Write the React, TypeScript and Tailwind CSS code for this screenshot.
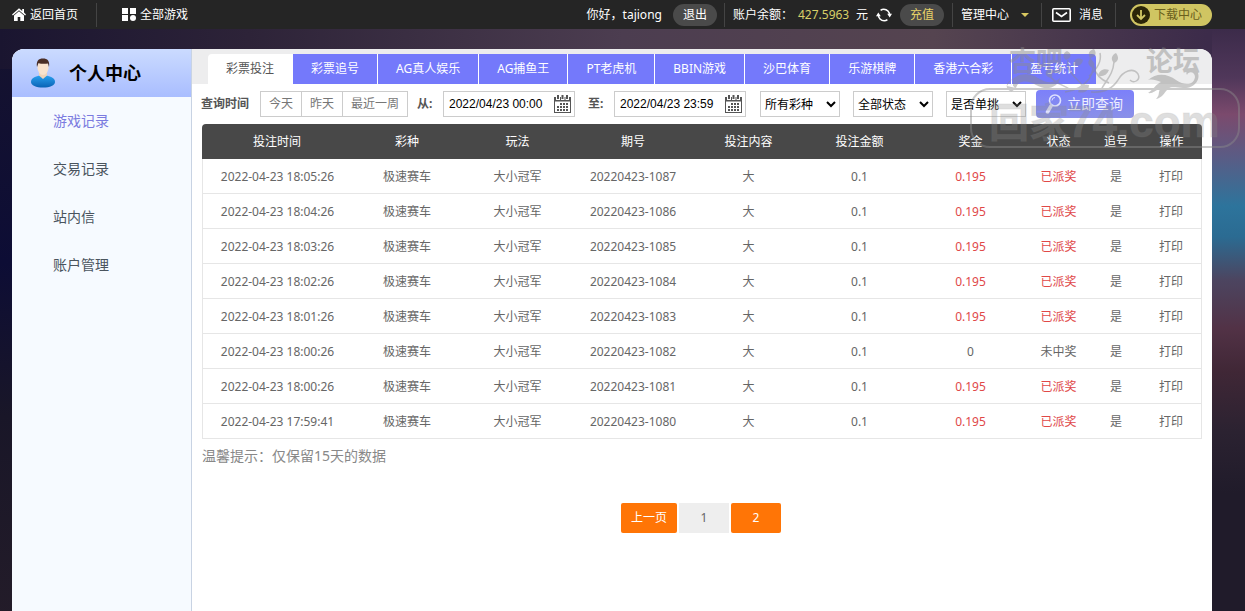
import { useState } from "react";

const tabs = [
  "彩票投注",
  "彩票追号",
  "AG真人娱乐",
  "AG捕鱼王",
  "PT老虎机",
  "BBIN游戏",
  "沙巴体育",
  "乐游棋牌",
  "香港六合彩",
  "盈亏统计",
];

const menu = ["游戏记录", "交易记录", "站内信", "账户管理"];

const columns = [
  { title: "投注时间", width: "w-[15%]" },
  { title: "彩种", width: "w-[11%]" },
  { title: "玩法", width: "w-[11.1%]" },
  { title: "期号", width: "w-[12%]" },
  { title: "投注内容", width: "w-[11.1%]" },
  { title: "投注金额", width: "w-[11.1%]" },
  { title: "奖金", width: "w-[11.1%]" },
  { title: "状态", width: "w-[6.5%]" },
  { title: "追号", width: "w-[5%]" },
  { title: "操作", width: "w-[6.1%]" },
];

const bets = [
  { time: "2022-04-23 18:05:26", issue: "20220423-1087", prize: "0.195" },
  { time: "2022-04-23 18:04:26", issue: "20220423-1086", prize: "0.195" },
  { time: "2022-04-23 18:03:26", issue: "20220423-1085", prize: "0.195" },
  { time: "2022-04-23 18:02:26", issue: "20220423-1084", prize: "0.195" },
  { time: "2022-04-23 18:01:26", issue: "20220423-1083", prize: "0.195" },
  { time: "2022-04-23 18:00:26", issue: "20220423-1082", prize: "0" },
  { time: "2022-04-23 18:00:26", issue: "20220423-1081", prize: "0.195" },
  { time: "2022-04-23 17:59:41", issue: "20220423-1080", prize: "0.195" },
];

function HomeIcon() {
  return (
    <svg width="14" height="13" viewBox="0 0 14 13" fill="#fff">
      <path d="M7 0.3 0 6.4l.9 1L7 2.2l6.1 5.2.9-1-2-1.8V1h-1.8v2z" />
      <path d="M7 3.3 2 7.6V13h3.7V9h2.6v4H12V7.6z" />
    </svg>
  );
}

function GridIcon() {
  return (
    <svg width="14" height="13" viewBox="0 0 14 13" fill="#fff">
      <rect width="6" height="6" />
      <rect x="8" width="6" height="6" />
      <rect y="7" width="6" height="6" />
      <circle cx="11" cy="10" r="3" />
    </svg>
  );
}

function RefreshIcon() {
  return (
    <svg width="16" height="14" viewBox="0 0 16 14" fill="none" stroke="#fff" strokeWidth="1.6">
      <path d="M2.3 6.500C2.300 10 5 12.800 8.200 12.800c1.300 0 2.300-.4 3.200-1.100" />
      <path d="M13.700 7.500C13.700 4 11 1.200 7.800 1.200c-1.300 0-2.300.4-3.200 1.100" />
      <path d="M0 8.300 2.300 4.500l2.500 3.800zM16 5.700 13.700 9.500l-2.500-3.800z" fill="#fff" stroke="none" />
    </svg>
  );
}

function MailIcon() {
  return (
    <svg width="19" height="14" viewBox="0 0 19 14" fill="none" stroke="#fff" strokeWidth="1.6">
      <rect x=".8" y=".8" width="17.4" height="12.4" rx="1" />
      <path d="m4 4.5 5.5 4 5.5-4" />
    </svg>
  );
}

function DownloadIcon() {
  return (
    <svg width="18" height="18" viewBox="0 0 18 18">
      <circle cx="9" cy="9" r="9" fill="#2b2508" />
      <path d="M9 4v8.5M5 9l4 4 4-4" fill="none" stroke="#d3c966" strokeWidth="1.8" />
    </svg>
  );
}

function CalendarIcon() {
  return (
    <svg width="17" height="18" viewBox="0 0 17 18" fill="#555">
      <path d="M3 0h2v4H3zM7.5 0h2v4h-2zM12 0h2v4h-2z" />
      <path
        fillRule="evenodd"
        d="M0 2h2v3h4V2h1v3h3.500V2h1v3H15V2h2v16H0zM1 6.500V17h15V6.500z"
      />
      <path d="M6 8h2v2H6zM9 8h2v2H9zM12 8h2v2h-2zM3 11h2v2H3zM6 11h2v2H6zM9 11h2v2H9zM12 11h2v2h-2zM3 14h2v2H3zM6 14h2v2H6zM9 14h2v2H9zM12 14h2v2h-2z" />
    </svg>
  );
}

function UserIcon() {
  return (
    <svg width="26" height="30" viewBox="0 0 26 30">
      <defs>
        <linearGradient id="shirt" x1="0" y1="0" x2="0" y2="1">
          <stop offset="0" stopColor="#2aa0ee" />
          <stop offset="1" stopColor="#0a63b5" />
        </linearGradient>
      </defs>
      <path d="M1 24c0-4 4-5.500 8.500-6.500h7C21 18.500 25 20 25 24c0 3.500-5 5.500-12 5.500S1 27.500 1 24z" fill="url(#shirt)" />
      <path d="M9 17.500 13 21l4-3.500V14H9z" fill="#f1d3b8" />
      <ellipse cx="13" cy="9.500" rx="5.500" ry="7.500" fill="#fae3cd" />
      <path d="M7 9C6 3 8.500.5 13 .5S20 3 19 9l-1-3.500c-3 .6-7 .5-9.500-.5z" fill="#4b2e26" />
    </svg>
  );
}

function SearchIcon() {
  return (
    <svg width="17" height="20" viewBox="0 0 17 20" fill="none" stroke="#dfe2ff">
      <circle cx="10" cy="6.500" r="5.500" strokeWidth="1.600" />
      <path d="M7 6.500a3 3 0 0 1 3-3" />
      <path d="m6 12-3.500 6" strokeWidth="3.500" strokeLinecap="round" />
    </svg>
  );
}

function Stamp() {
  return (
    <svg
      className="pointer-events-none absolute top-10 right-0 opacity-45"
      width="280"
      height="115"
      viewBox="0 0 280 115"
      fill="#8c8c8c"
      fontWeight="bold"
      aria-hidden="true"
    >
      <rect x="6" y="49" width="268" height="58" rx="19" fill="none" stroke="#8c8c8c" strokeWidth="2" />
      <text x="44" y="31" fontSize="27">杏吧</text>
      <text x="181" y="31" fontSize="27">论坛</text>
      <g fillOpacity=".65" stroke="#8c8c8c" strokeOpacity=".35">
        <text x="24" y="97" fontSize="40">回家</text>
        <text x="103" y="97" fontSize="44" fontFamily="Liberation Sans">74.com</text>
      </g>
      <path d="M42 46c6-12 20-15 31-8 9 6 17 5 22 0-2 10-14 13-24 7-8-5-18-5-20 3zM48 39c-6 2-9 9-3 12 4 1 6-4 3-5" />
      <path d="M183 40c9-8 20-6 28 0 9 6 18 5 19-3 0-6-7-6-8-2-3-6 6-9 10-4 5 8-3 18-14 17-7 0-11-2-15 1-4 4-6 9-12 10 4-4 2-6 4-10-5 1-7 5-12 4 5-3 8-9 13-11-5-2-9-3-13-2z" />
      <g fill="none" stroke="#8c8c8c" strokeWidth="1.5">
        <path d="M100 52c8-1 18-5 24-13 5-7 5-14 1-21M106 50c-7-5-16-6-21-14M117 45c-6-8-16-13-14-25M124 36c7-6 13-14 11-23" />
        <path d="M126 52c13 1 22-4 27-12 5-9 15-13 20-6 3 6-4 10-8 6M136 50c5-10 12-15 13-28M144 43c-8-3-14-10-16-18" />
      </g>
      <path d="M101 20c-4-3-3-7 1-9 5 2 5 7-1 9zM108 25c1-6 5-8 10-5-1 5-5 7-10 5zM86 38c-5-1-7-5-4-8 5 0 7 4 4 8zM125 18c-3-5 0-8 4-9 3 4 2 8-4 9zM149 23c-4-4-2-8 2-10 3 4 3 8-2 10zM128 28c-5-2-6-6-3-9 4 2 6 6 3 9zM133 36c1-6 6-8 11-6-2 5-6 7-11 6zM113 52c2-6 6-9 11-7 0 6-5 9-11 7z" />
    </svg>
  );
}

function Divider() {
  return <span className="h-6 w-px bg-[#444]" />;
}

function TopBar() {
  return (
    <header className="flex h-[29px] items-center justify-between bg-[#252525] pr-[33px] pl-3 text-white">
      <nav className="flex items-center whitespace-nowrap">
        <a href="#" className="mr-[18px] flex items-center gap-1">
          <HomeIcon />
          返回首页
        </a>
        <Divider />
        <a href="#" className="ml-[25px] flex items-center gap-1">
          <GridIcon />
          全部游戏
        </a>
      </nav>
      <div className="flex items-center whitespace-nowrap">
        <span>你好，tajiong</span>
        <button className="mr-[7px] ml-[11px] h-[22px] w-11 rounded-full bg-[#4a4a4a]">退出</button>
        <Divider />
        <span className="ml-2">账户余额：</span>
        <span className="ml-[5px] w-[53px] text-[#d8d068]">427.5963</span>
        <span className="mr-2 ml-[5px]">元</span>
        <button aria-label="刷新余额">
          <RefreshIcon />
        </button>
        <button className="mx-2 h-[22px] w-11 rounded-full bg-[#4a4a4a] text-[#e8d468]">充值</button>
        <Divider />
        <a href="#" className="mr-[10px] ml-2 flex items-center">
          管理中心
          <span className="mr-[2px] ml-3 border-x-4 border-t-4 border-x-transparent border-t-[#d8c860]" />
        </a>
        <Divider />
        <a href="#" className="mr-3 ml-[10px] flex items-center gap-2">
          <MailIcon />
          消息
        </a>
        <Divider />
        <a
          href="#"
          className="ml-[14px] flex h-[22px] w-[82px] items-center gap-1 rounded-full bg-[#d0c562] pl-[2px] text-[#6b5f1c]"
        >
          <DownloadIcon />
          下载中心
        </a>
      </div>
    </header>
  );
}

function DateField({ id, label, value }: { id: string; label: string; value: string }) {
  return (
    <div className="flex items-center gap-[9px]">
      <label htmlFor={id} className="w-[17px] font-bold whitespace-nowrap text-[#555]">
        {label}
      </label>
      <div className="flex h-[26px] w-[132px] items-center justify-between border border-[#ccc] pr-[3px] pl-[5px]">
        <input
          id={id}
          defaultValue={value}
          className="w-[100px] font-['Liberation_Sans',sans-serif] text-black outline-none"
        />
        <CalendarIcon />
      </div>
    </div>
  );
}

function Filters() {
  return (
    <form className="flex h-10 items-center pl-[9px]" onSubmit={(e) => e.preventDefault()}>
      <span className="mr-[11px] font-bold text-[#555]">查询时间</span>
      <div className="mr-[9px] flex h-[26px] divide-x divide-[#ccc] border border-[#ccc] text-[#777]">
        <button className="w-[41px]">今天</button>
        <button className="w-[41px]">昨天</button>
        <button className="w-16">最近一周</button>
      </div>
      <DateField id="from" label="从:" value="2022/04/23 00:00" />
      <span className="w-[13px]" />
      <DateField id="to" label="至:" value="2022/04/23 23:59" />
      <div className="ml-[14px] flex gap-[13px] text-black">
        {["所有彩种", "全部状态", "是否单挑"].map((name) => (
          <select key={name} aria-label={name} className="h-[26px] w-20 border border-[#ccc] bg-white">
            <option>{name}</option>
          </select>
        ))}
      </div>
      <button className="ml-[10px] flex h-7 w-[98px] items-center gap-[5px] rounded-sm bg-linear-to-b from-[#7c80fa] to-[#8a90e8] pl-[9px] text-sm whitespace-nowrap text-[#eef]">
        <SearchIcon />
        立即查询
      </button>
    </form>
  );
}

function BetTable() {
  return (
    <table className="w-full table-fixed border-separate border-spacing-0 text-center text-[#666]">
      <thead>
        <tr className="h-[35px] text-white">
          {columns.map((c) => (
            <th
              key={c.title}
              className={`${c.width} bg-[#484848] p-0 font-normal first:rounded-tl-sm last:rounded-tr-sm`}
            >
              {c.title}
            </th>
          ))}
        </tr>
      </thead>
      <tbody className="[&_td]:border-b [&_td]:border-[#e6e6e6] [&_td]:pt-[2px] [&_td:first-child]:border-l [&_td:last-child]:border-r">
        {bets.map((b) => {
          const won = b.prize !== "0";
          const color = won ? "text-[#e04848]" : "";
          return (
            <tr key={b.issue} className="h-[35px]">
              <td>{b.time}</td>
              <td>极速赛车</td>
              <td>大小冠军</td>
              <td>{b.issue}</td>
              <td>大</td>
              <td>0.1</td>
              <td className={color}>{b.prize}</td>
              <td className={color}>{won ? "已派奖" : "未中奖"}</td>
              <td>是</td>
              <td>
                <a href="#">打印</a>
              </td>
            </tr>
          );
        })}
      </tbody>
    </table>
  );
}

export default function App() {
  const [tab, setTab] = useState(0);

  return (
    <div className="relative flex h-screen flex-col overflow-hidden bg-[#171327] [background-image:linear-gradient(#3c2b4a,#50375a_8%,#7b4a6d_14%,#5a5c85_21%,#2d749c_29%,#2b6b92_34%,#4c4560_41%,#523246_49%,#402736_56%,#2b2231_66%,#201b2a_76%),linear-gradient(90deg,#1a1530,#2d2338_20%,#4c3d50_50%,#554450_75%,#3c2b4a_97%),linear-gradient(#15122f,#0d0d35_35%,#191628_60%,#251d29)] [background-position:right_29px,0_29px,0_49px] [background-size:33px_100%,100%_40px,100%_100%] bg-no-repeat font-['Noto_Sans','Noto_Sans_CJK_SC',sans-serif] text-xs">
      <TopBar />
      <div className="mt-5 mr-[33px] ml-3 flex grow overflow-hidden rounded-t-xl bg-white">
        <aside className="w-[180px] shrink-0 border-r border-[#c8d3e3] bg-[#f6faff]">
          <h1 className="flex h-12 items-center gap-[13px] bg-linear-to-b from-[#cbdbff] to-[#a9bdff] pl-[18px] text-lg font-bold text-black">
            <UserIcon />
            个人中心
          </h1>
          <nav className="flex flex-col text-sm text-[#4a545e]">
            {menu.map((m, i) => (
              <a
                key={m}
                href="#"
                className={`flex h-12 items-center pl-[41px] ${i === 0 ? "text-[#7b7be0]" : ""}`}
              >
                {m}
              </a>
            ))}
          </nav>
        </aside>
        <main className="min-w-0 grow">
          <div className="flex h-[35px] items-end bg-[#ededee] pl-4">
            {tabs.map((t, i) => (
              <button
                key={t}
                onClick={() => setTab(i)}
                className={`h-[30px] border-r border-white px-[18px] whitespace-nowrap first:rounded-tl-sm last:rounded-tr-sm last:border-r-0 ${
                  i === tab ? "bg-white text-[#555]" : "bg-[#7479fb] text-white"
                }`}
              >
                {t}
              </button>
            ))}
          </div>
          <Filters />
          <div className="px-[10px]">
            <BetTable />
            <p className="mt-[7px] text-sm text-[#888]">温馨提示：仅保留15天的数据</p>
            <div className="mt-[37px] flex justify-center gap-[2px] pr-[2px] text-white">
              <button className="h-[30px] w-14 rounded-xs bg-[#ff7506]">上一页</button>
              <button className="h-[30px] w-[50px] bg-[#eee] text-[#666]">1</button>
              <button className="h-[30px] w-[50px] rounded-xs bg-[#ff7506]">2</button>
            </div>
          </div>
        </main>
      </div>
      <Stamp />
    </div>
  );
}
